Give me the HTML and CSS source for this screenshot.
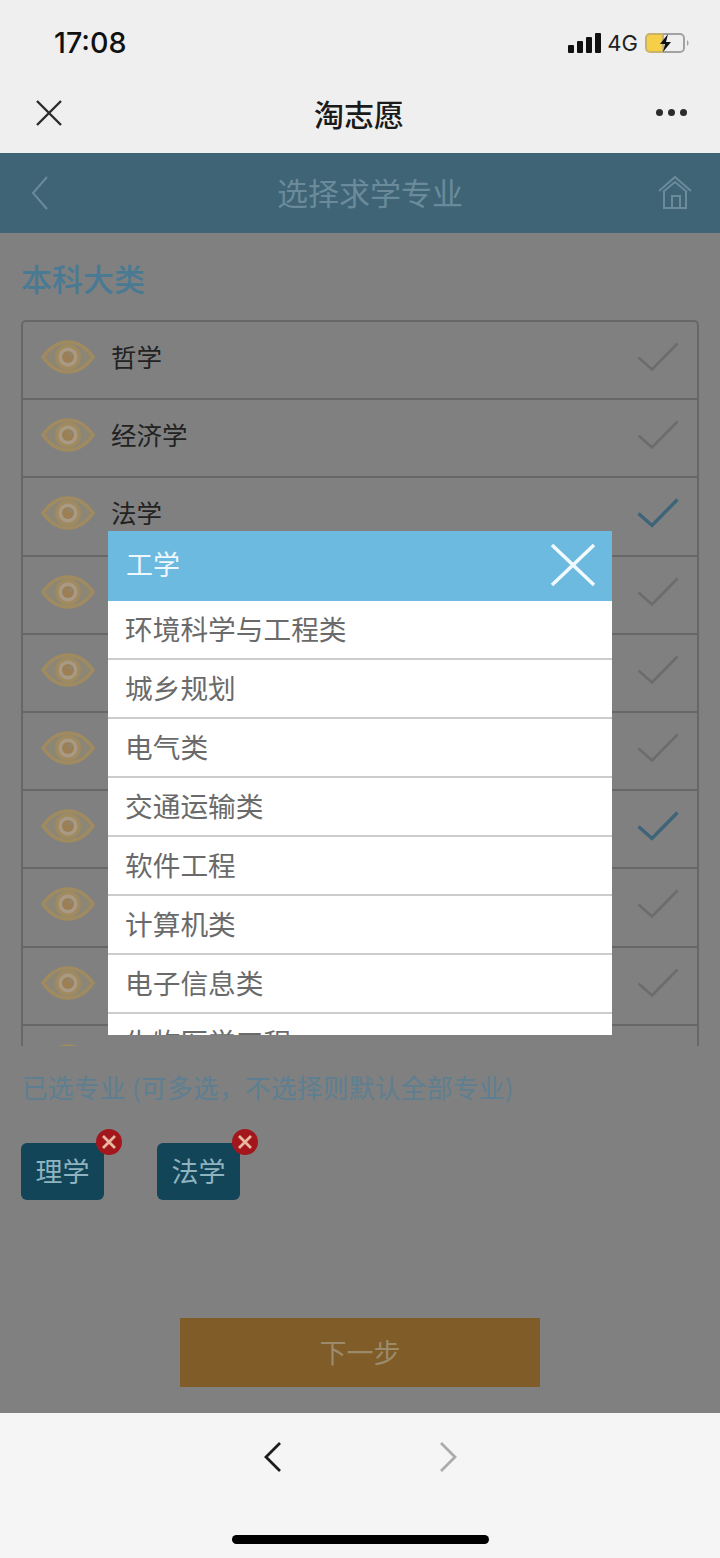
FILE: index.html
```html
<!DOCTYPE html>
<html lang="zh-CN">
<head>
  <meta charset="UTF-8">
  <title>淘志愿</title>
  <link rel="stylesheet" href="styles.css">
</head>
<body>

<div class="phone">

  <div class="status-bar">
    <span class="time">17:08</span>
    <div class="status-icons">
      <div class="signal"><i></i><i></i><i></i><i></i></div>
      <span class="net">4G</span>
      <svg class="battery" width="46" height="24" viewBox="0 0 46 24">
        <path d="M6 3h13v18H6a4 4 0 0 1-4-4V7a4 4 0 0 1 4-4z" fill="#f5cf47" stroke="#c9b26a" stroke-width="2"/>
        <path d="M19 3h17a4 4 0 0 1 4 4v10a4 4 0 0 1-4 4H19" fill="none" stroke="#a2a2a2" stroke-width="2"/>
        <path d="M24 3l-8 10h5l-2 8 8-10h-5z" fill="#111"/>
        <path d="M43 9v6a3 3 0 0 0 1.500-3 3 3 0 0 0-1.500-3z" fill="#a2a2a2"/>
      </svg>
    </div>
  </div>

  <div class="wx-nav">
    <svg class="wx-close" width="28" height="28" viewBox="0 0 28 28">
      <path d="M2 2l24 24M26 2L2 26" stroke="#2b2b2b" stroke-width="2.400" fill="none"/>
    </svg>
    <span class="wx-title">淘志愿</span>
    <div class="wx-more"><i></i><i></i><i></i></div>
  </div>

  <div class="webview">
    <div class="app-header">
      <svg width="20" height="36" viewBox="0 0 20 36">
        <path d="M17 2L3 18l14 16" stroke="#6b8b9b" stroke-width="2" fill="none"/>
      </svg>
      <span class="app-title">选择求学专业</span>
      <svg width="36" height="34" viewBox="0 0 36 34" fill="none" stroke="#6b8b9b" stroke-width="2">
        <path d="M1 15L17 1l16 14"/>
        <path d="M5 16L17 6l12 10"/>
        <path d="M6 15v17h22V15"/>
        <path d="M14 32V20h8v12"/>
      </svg>
    </div>

    <h2 class="section-title">本科大类</h2>

    <ul class="major-list">
      <li class="major-row"><svg class="eye" viewBox="0 0 54 34"><use href="#eye"/></svg><span>哲学</span><svg class="check" viewBox="0 0 42 30"><use href="#check"/></svg></li>
      <li class="major-row"><svg class="eye" viewBox="0 0 54 34"><use href="#eye"/></svg><span>经济学</span><svg class="check" viewBox="0 0 42 30"><use href="#check"/></svg></li>
      <li class="major-row selected"><svg class="eye" viewBox="0 0 54 34"><use href="#eye"/></svg><span>法学</span><svg class="check" viewBox="0 0 42 30"><use href="#check"/></svg></li>
      <li class="major-row"><svg class="eye" viewBox="0 0 54 34"><use href="#eye"/></svg><span></span><svg class="check" viewBox="0 0 42 30"><use href="#check"/></svg></li>
      <li class="major-row"><svg class="eye" viewBox="0 0 54 34"><use href="#eye"/></svg><span></span><svg class="check" viewBox="0 0 42 30"><use href="#check"/></svg></li>
      <li class="major-row"><svg class="eye" viewBox="0 0 54 34"><use href="#eye"/></svg><span></span><svg class="check" viewBox="0 0 42 30"><use href="#check"/></svg></li>
      <li class="major-row selected"><svg class="eye" viewBox="0 0 54 34"><use href="#eye"/></svg><span></span><svg class="check" viewBox="0 0 42 30"><use href="#check"/></svg></li>
      <li class="major-row"><svg class="eye" viewBox="0 0 54 34"><use href="#eye"/></svg><span></span><svg class="check" viewBox="0 0 42 30"><use href="#check"/></svg></li>
      <li class="major-row"><svg class="eye" viewBox="0 0 54 34"><use href="#eye"/></svg><span></span><svg class="check" viewBox="0 0 42 30"><use href="#check"/></svg></li>
      <li class="major-row"><svg class="eye" viewBox="0 0 54 34"><use href="#eye"/></svg><span></span><svg class="check" viewBox="0 0 42 30"><use href="#check"/></svg></li>
    </ul>

    <p class="picked-label">已选专业 (可多选，不选择则默认全部专业)</p>

    <div class="picked-tags">
      <div class="tag">理学<b class="tag-del"><svg width="14" height="14" viewBox="0 0 14 14"><path d="M1 1l12 12M13 1L1 13" stroke="#e8b8a0" stroke-width="2.800"/></svg></b></div>
      <div class="tag">法学<b class="tag-del"><svg width="14" height="14" viewBox="0 0 14 14"><path d="M1 1l12 12M13 1L1 13" stroke="#e8b8a0" stroke-width="2.800"/></svg></b></div>
    </div>

    <div class="next-btn">下一步</div>

    <div class="modal">
      <div class="modal-head">
        <span>工学</span>
        <svg width="46" height="44" viewBox="0 0 46 44">
          <path d="M2 2l42 40M44 2L2 42" stroke="#f2fbff" stroke-width="3.500" fill="none"/>
        </svg>
      </div>
      <ul class="modal-list">
        <li>环境科学与工程类</li>
        <li>城乡规划</li>
        <li>电气类</li>
        <li>交通运输类</li>
        <li>软件工程</li>
        <li>计算机类</li>
        <li>电子信息类</li>
        <li>生物医学工程</li>
      </ul>
    </div>
  </div>

  <div class="wx-bottom">
    <div class="wx-arrows">
      <svg width="20" height="32" viewBox="0 0 20 32"><path d="M17 2L3 16l14 14" stroke="#1c1c1c" stroke-width="2.800" fill="none"/></svg>
      <svg width="20" height="32" viewBox="0 0 20 32"><path d="M3 2l14 14L3 30" stroke="#ababab" stroke-width="2.800" fill="none"/></svg>
    </div>
    <div class="home-bar"></div>
  </div>

</div>

<svg class="defs" width="0" height="0">
  <symbol id="eye" viewBox="0 0 54 34">
    <path d="M2 17C9 7 17 2 27 2s18 5 25 15c-7 10-15 15-25 15S9 27 2 17z" fill="#8c8676" stroke="#a08a5f" stroke-width="3.500"/>
    <circle cx="27" cy="17" r="13" fill="#a08a5f"/>
    <circle cx="27" cy="17" r="9.500" fill="#a99a86"/>
    <circle cx="27" cy="17" r="6" fill="#9c7f55"/>
    <circle cx="29" cy="14.500" r="2" fill="#8c8676"/>
  </symbol>
  <symbol id="check" viewBox="0 0 42 30">
    <path d="M1.500 15.500L15 27.500 40.500 1.500" fill="none" stroke="currentColor"/>
  </symbol>
</svg>

</body>
</html>
```

FILE: styles.css
```css
* {
  box-sizing: border-box;
}

body {
  margin: 0;
  font-family: "Noto Sans CJK SC", "Liberation Sans", sans-serif;
  background: #808080;
}

ul {
  margin: 0;
  padding: 0;
  list-style: none;
}

.phone {
  width: 720px;
  height: 1558px;
  overflow: hidden;
}

.defs {
  position: absolute;
}

/* status bar */
.status-bar {
  height: 80px;
  padding: 22px 30px 0 54px;
  background: #efefef;
  display: flex;
  justify-content: space-between;
  align-items: flex-start;
}

.time {
  font-family: Inter, "Liberation Sans", sans-serif;
  font-size: 28.700px;
  font-weight: 500;
  line-height: 42px;
  color: #111;
}

.status-icons {
  display: flex;
  align-items: center;
  gap: 6px;
  height: 42px;
}

.signal {
  display: flex;
  align-items: flex-end;
  gap: 3px;
  height: 20px;
}

.signal i {
  width: 6px;
  background: #111;
  border-radius: 1px;
}

.signal i:nth-child(1) { height: 8px; }
.signal i:nth-child(2) { height: 12px; }
.signal i:nth-child(3) { height: 16px; }
.signal i:nth-child(4) { height: 20px; }

.net {
  font-family: Inter, "Liberation Sans", sans-serif;
  font-size: 22px;
  color: #222;
}

/* wechat title bar */
.wx-nav {
  height: 73px;
  padding: 0 33px 8px 35px;
  background: #efefef;
  display: flex;
  justify-content: space-between;
  align-items: center;
}

.wx-title {
  font-size: 30px;
  font-weight: 500;
  color: #1a1a1a;
  margin-right: 1px;
}

.wx-more {
  display: flex;
  gap: 5px;
}

.wx-more i {
  width: 7px;
  height: 7px;
  border-radius: 50%;
  background: #2b2b2b;
}

/* web page */
.webview {
  position: relative;
  height: 1260px;
  background: #808080;
  overflow: hidden;
}

.app-header {
  height: 80px;
  padding: 0 26px 0 30px;
  background: #3e6475;
  display: flex;
  justify-content: space-between;
  align-items: center;
}

.app-title {
  font-size: 31px;
  color: #6b8b9b;
  margin-left: 32px;
  padding-bottom: 4px;
}

.section-title {
  margin: 0;
  padding: 23px 0 0 21px;
  height: 87px;
  font-size: 31px;
  line-height: 44px;
  font-weight: 500;
  color: #487a94;
}

.major-list {
  margin: 0 21px 0 21px;
  height: 726px;
  border: 2px solid #676767;
  border-bottom: 0;
  border-radius: 5px 5px 0 0;
  overflow: hidden;
}

.major-row {
  height: 78.200px;
  padding: 0 18px 6px 18px;
  border-bottom: 2px solid #676767;
  display: flex;
  align-items: center;
  font-size: 25.500px;
  color: #222;
}

.major-row span {
  flex: 1;
  margin-left: 16px;
  padding-bottom: 4px;
}

.eye {
  width: 54px;
  height: 34px;
}

.check {
  width: 42px;
  height: 30px;
  color: #6c6c6c;
  stroke-width: 2.600;
}

.selected .check {
  color: #3d6478;
  stroke-width: 3.400;
}

.picked-label {
  margin: 0;
  padding: 23px 0 0 22px;
  font-size: 25.700px;
  letter-spacing: 0.3px;
  line-height: 36px;
  white-space: nowrap;
  color: #5d7f91;
}

.picked-tags {
  display: flex;
  gap: 53px;
  margin: 38px 0 0 21px;
}

.tag {
  position: relative;
  width: 83px;
  height: 57px;
  border-radius: 6px;
  background: #134559;
  color: #8fb3bf;
  font-size: 27px;
  line-height: 56px;
  text-align: center;
}

.tag-del {
  position: absolute;
  top: -14px;
  right: -18px;
  width: 26px;
  height: 26px;
  border-radius: 50%;
  background: #a3161c;
  display: flex;
  align-items: center;
  justify-content: center;
}

.next-btn {
  width: 360px;
  height: 69px;
  margin: 118px auto 0;
  background: #7f5c28;
  color: #9c8a6c;
  font-size: 27px;
  line-height: 68px;
  text-align: center;
}

/* popup */
.modal {
  position: absolute;
  top: 378px;
  left: 108px;
  width: 504px;
  height: 504px;
  background: #fff;
  overflow: hidden;
}

.modal-head {
  height: 70px;
  padding: 0 16px 2px 18px;
  background: #6dbae0;
  color: #eef8fc;
  font-size: 27px;
  display: flex;
  justify-content: space-between;
  align-items: center;
}

.modal-head span {
  padding-bottom: 4px;
}

.modal-list li {
  height: 59px;
  padding-left: 17px;
  border-bottom: 2px solid #ccc;
  font-size: 27.700px;
  line-height: 54px;
  color: #6a6a6a;
}

/* wechat bottom bar */
.wx-bottom {
  height: 145px;
  background: #f5f5f5;
}

.wx-arrows {
  display: flex;
  justify-content: center;
  gap: 155px;
  padding: 28px 0 0 0;
  height: 122px;
}

.home-bar {
  width: 257px;
  height: 9px;
  margin: 0 auto;
  border-radius: 5px;
  background: #000;
}
```
